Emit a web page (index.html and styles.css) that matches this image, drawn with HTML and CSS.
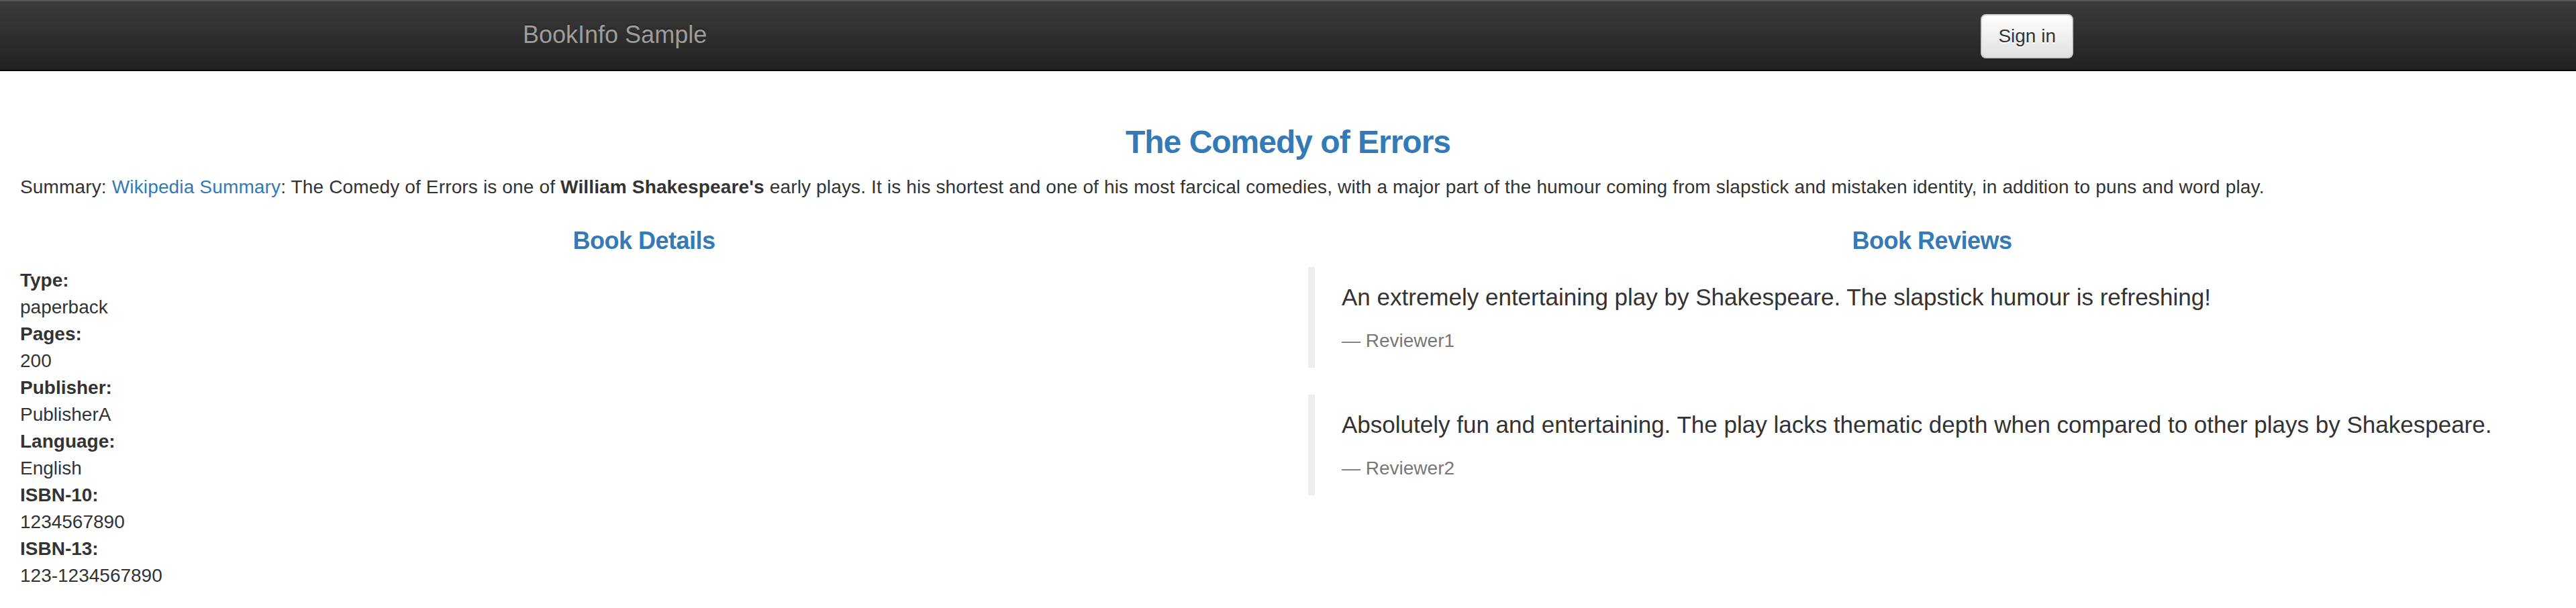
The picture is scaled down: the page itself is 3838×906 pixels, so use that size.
FILE: index.html
```html
<!DOCTYPE html>
<html lang="en">
<head>
<meta charset="utf-8">
<title>Simple Bookstore App</title>
<link rel="stylesheet" href="styles.css">
</head>
<body>
<nav class="navbar">
  <div class="navbar-container">
    <a class="navbar-brand" href="#">BookInfo Sample</a>
    <button type="button" class="btn-signin">Sign in</button>
  </div>
</nav>

<div class="page">
  <h3 class="book-title">The Comedy of Errors</h3>
  <p class="summary">Summary: <a href="#">Wikipedia Summary</a>: The Comedy of Errors is one of <b>William Shakespeare's</b> early plays. It is his shortest and one of his most farcical comedies, with a major part of the humour coming from slapstick and mistaken identity, in addition to puns and word play.</p>

  <div class="columns">
    <div class="column">
      <h4 class="section-title">Book Details</h4>
      <dl class="details">
        <dt>Type:</dt><dd>paperback</dd>
        <dt>Pages:</dt><dd>200</dd>
        <dt>Publisher:</dt><dd>PublisherA</dd>
        <dt>Language:</dt><dd>English</dd>
        <dt>ISBN-10:</dt><dd>1234567890</dd>
        <dt>ISBN-13:</dt><dd>123-1234567890</dd>
      </dl>
    </div>
    <div class="column">
      <h4 class="section-title">Book Reviews</h4>
      <blockquote class="review">
        <p>An extremely entertaining play by Shakespeare. The slapstick humour is refreshing!</p>
        <small>Reviewer1</small>
      </blockquote>
      <blockquote class="review">
        <p>Absolutely fun and entertaining. The play lacks thematic depth when compared to other plays by Shakespeare.</p>
        <small>Reviewer2</small>
      </blockquote>
    </div>
  </div>
</div>
</body>
</html>
```

FILE: styles.css
```css
* {
  box-sizing: border-box;
}

html, body {
  margin: 0;
  padding: 0;
}

body {
  font-family: "Liberation Sans", Arial, Helvetica, sans-serif;
  font-size: 28px;
  line-height: 1.42857143;
  color: #333;
  background: #fff;
  overflow: hidden;
}

a {
  color: #337ab7;
  text-decoration: none;
}

/* Navbar */
.navbar {
  background-color: #222;
  background-image: linear-gradient(to bottom, #3c3c3c 0, #222 100%);
  border-bottom: 2px solid #080808;
  box-shadow: inset 0 2px 0 rgba(255, 255, 255, 0.15);
  margin-bottom: 40px;
}

.navbar-container {
  width: 2340px;
  margin: 0 auto;
  padding: 0 30px;
  height: 104px;
  display: flex;
  justify-content: space-between;
  align-items: flex-start;
}

.navbar-brand {
  color: #9d9d9d;
  font-size: 36px;
  line-height: 40px;
  padding: 32px 30px;
  margin-left: -30px;
  text-shadow: 0 -2px 0 rgba(0, 0, 0, 0.25);
}

.btn-signin {
  margin-top: 21px;
  margin-right: -30px;
  height: 66px;
  padding: 10px 24px;
  font-family: "Liberation Sans", Arial, Helvetica, sans-serif;
  font-size: 28px;
  line-height: 40px;
  color: #333;
  background-color: #fff;
  background-image: linear-gradient(to bottom, #fff 0, #e0e0e0 100%);
  border: 2px solid #ccc;
  border-radius: 8px;
  text-shadow: 0 2px 0 #fff;
  box-shadow: inset 0 2px 0 rgba(255, 255, 255, 0.15), 0 2px 2px rgba(0, 0, 0, 0.075);
}

/* Page */
.page {
  display: flow-root;
  padding: 0 30px;
}

.book-title {
  margin: 40px 0 20px;
  font-size: 48px;
  font-weight: bold;
  letter-spacing: -1px;
  line-height: 1.1;
  color: #337ab7;
  text-align: center;
}

.summary {
  margin: 0 0 20px;
  letter-spacing: 0.15px;
}

.columns {
  display: grid;
  grid-template-columns: 1fr 1fr;
  margin: 0 -30px;
}

.column {
  padding: 0 30px;
  min-width: 0;
}

.section-title {
  margin: 20px 0;
  font-size: 36px;
  font-weight: bold;
  letter-spacing: -0.5px;
  line-height: 1.1;
  color: #337ab7;
  text-align: center;
}

.details {
  margin: 0;
}

.details dt {
  font-weight: bold;
}

.details dd {
  margin: 0;
}

.review {
  margin: 0 0 40px;
  padding: 20px 40px;
  border-left: 10px solid #eee;
  font-size: 35px;
}

.review p {
  margin: 0 0 20px;
}

.review small {
  display: block;
  font-size: 28px;
  line-height: 1.42857143;
  color: #777;
}

.review small::before {
  content: "\2014 \00A0";
}
```
